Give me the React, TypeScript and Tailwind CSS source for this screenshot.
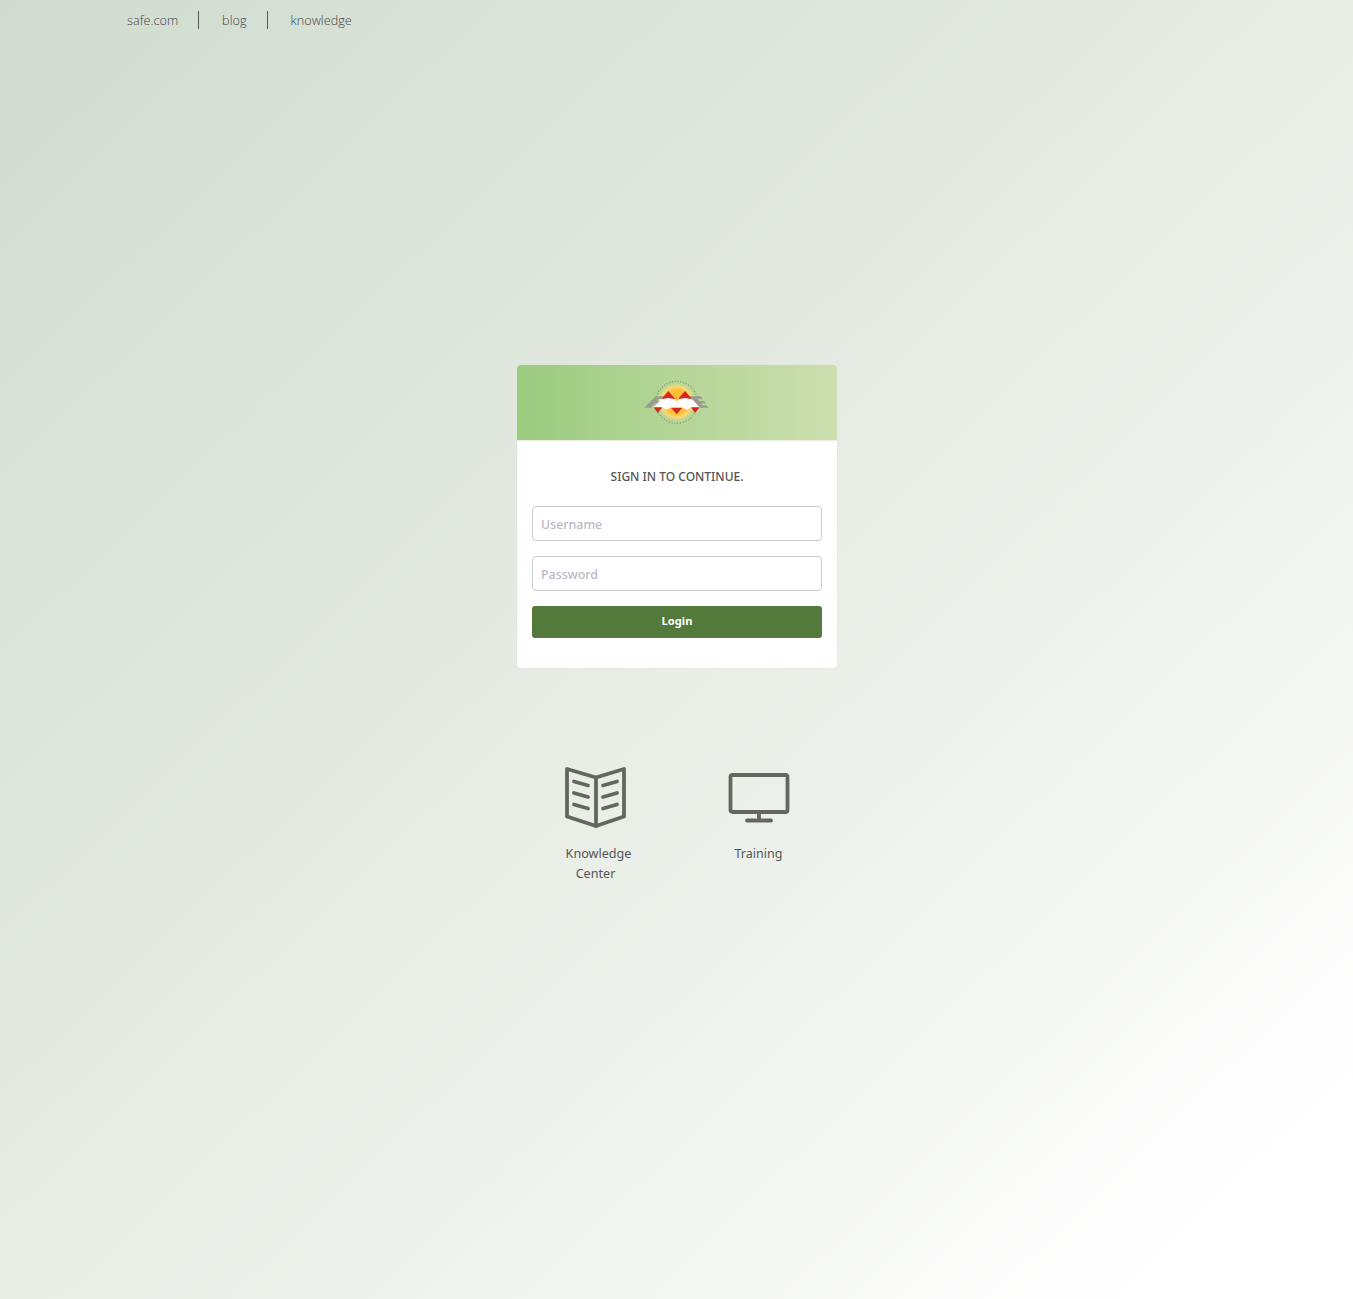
export default function App() {
  const font = "font-['Noto_Sans','Open_Sans',sans-serif]";
  return (
    <div className={`${font} min-h-[1299px] bg-[linear-gradient(to_bottom_right,#d0dccf_0%,#e3e9e0_40%,#edf1eb_62%,#ffffff_92%)] text-[#555]`}>
      <nav className="flex h-[365px] items-start pl-[127px] pt-[11px] font-['Open_Sans',sans-serif] text-[12.7px] font-light leading-[18px] text-[#444]">
        <a className="border-r border-[#555] pr-[20px] pt-[1px] leading-[17px]">safe.com</a>
        <a className="border-r border-[#555] pl-[23px] pr-[20px] pt-[1px] leading-[17px]">blog</a>
        <a className="pl-[23px] pt-[1px] leading-[17px]">knowledge</a>
      </nav>

      <main className="ml-[517px] w-[320px]">
        <section className="overflow-hidden rounded-[4px] bg-white shadow-[0_0_2px_rgba(0,0,0,0.06)]">
          <header className="flex h-[76px] items-center justify-center border-b border-[#e8efe0] bg-[linear-gradient(to_right,#9bcb7f,#cddfae)]">
            <svg width="84" height="60" viewBox="0 0 252 180" className="mb-[2px]">
              <defs>
                <radialGradient id="sun">
                  <stop offset="0%" stopColor="#ffb22a" />
                  <stop offset="65%" stopColor="#ffc23a" />
                  <stop offset="84%" stopColor="#f8d878" />
                  <stop offset="100%" stopColor="#d6d98e" stopOpacity="0.3" />
                </radialGradient>
              </defs>
              <circle cx="125" cy="90" r="56" fill="url(#sun)" />
              <circle cx="125" cy="91" r="63" fill="none" stroke="#8a9680" strokeWidth="3.5" strokeDasharray="3.5 5" />
              <path d="M28 107 L62 73 H100 V80 H72 L66 87 H80 V94 H60 L48 107 Z" fill="#9b9b90" />
              <path d="M150 73 H197 L204 80 H188 L193 87 H208 L212 94 H198 L202 100 H214 L221 107 H170 Z" fill="#9b9b90" />
              <path d="M55 107 L82 78 H118 L125 89 L132 78 H168 L195 107 H168 L155 113 L142 107 H108 L95 113 L82 107 Z" fill="#ffffff" />
              <path d="M100 57 L121 82 L100 78 L79 82 Z" fill="#d4281f" />
              <path d="M150 57 L171 82 L150 78 L129 82 Z" fill="#d4281f" />
              <path d="M56 106 H82 L68 123 Z" fill="#d4281f" />
              <path d="M108 107 H142 L125 127 Z" fill="#d4281f" />
              <path d="M168 106 H194 L180 123 Z" fill="#d4281f" />
            </svg>
          </header>
          <form className="flex h-[227px] flex-col px-[15px]">
            <h1 className="mt-[27px] text-center text-[12px] font-medium leading-[18px] text-[#555]">SIGN IN TO CONTINUE.</h1>
            <input
              placeholder="Username"
              className="mt-[20px] h-[35px] w-full rounded-[4px] border border-[#ccc] bg-white px-[8px] pt-[1px] text-[12.4px] font-medium text-[#555] outline-none placeholder:text-[#b9b9c6]"
            />
            <input
              placeholder="Password"
              className="mt-[15px] h-[35px] w-full rounded-[4px] border border-[#ccc] bg-white px-[8px] pt-[1px] text-[12.4px] font-medium text-[#555] outline-none placeholder:text-[#b9b9c6]"
            />
            <button type="button" className="mt-[15px] h-[32px] w-full rounded-[3px] bg-[#537a3b] pb-[1px] text-[11.2px] font-bold text-white">
              Login
            </button>
          </form>
        </section>
      </main>

      <div className="ml-[514px] mt-[98px] grid w-[326px] grid-cols-2 text-center text-[12.6px] leading-[20px] text-[#555]">
        <div className="flex flex-col items-center">
          <svg width="64" height="64" viewBox="0 0 64 64" fill="none" stroke="#666660" strokeWidth="3.8" strokeLinecap="round" strokeLinejoin="round">
            <path d="M3 3 L32 11.5 L60 3 V50.5 L32 60 L3 50.5 Z" />
            <path d="M32 11.5 V60" />
            <path d="M10 15.5 L24 19.5 M10 27 L24 31 M10 38.5 L24 42.5" />
            <path d="M39 19.5 L53 15.5 M39 31 L53 27 M39 42.5 L53 38.5" />
          </svg>
          <p className="mt-[14px]">
            <span className="block pl-[6px]">Knowledge</span>
            <span className="block">Center</span>
          </p>
        </div>
        <div className="flex flex-col items-center">
          <svg width="64" height="64" viewBox="0 0 64 64" fill="none" stroke="#666660" strokeWidth="3.8" strokeLinecap="round" strokeLinejoin="round">
            <rect x="3.5" y="9" width="57" height="37" rx="2" />
            <path d="M32 46 V54.5 M20 54.5 H44" />
          </svg>
          <p className="mt-[14px]">Training</p>
        </div>
      </div>
    </div>
  );
}
